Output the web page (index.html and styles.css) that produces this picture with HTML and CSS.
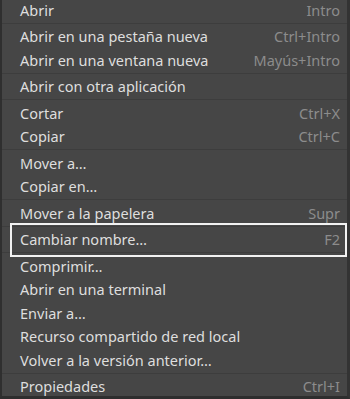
FILE: index.html
```html
<!DOCTYPE html>
<html lang="es">
<head>
    <meta charset="UTF-8">
    <meta name="viewport" content="width=device-width, initial-scale=1.0">
    <title>Menú contextual</title>
    <link rel="stylesheet" href="styles.css">
</head>
<body>
    <div class="menu">
        <ul class="menu-list">
            <li class="item first"><span>Abrir</span><span class="accel">Intro</span></li>
            <li class="sep"></li>
            <li class="item"><span>Abrir en una pestaña nueva</span><span class="accel">Ctrl+Intro</span></li>
            <li class="item"><span>Abrir en una ventana nueva</span><span class="accel">Mayús+Intro</span></li>
            <li class="sep"></li>
            <li class="item"><span>Abrir con otra aplicación</span></li>
            <li class="sep"></li>
            <li class="item"><span>Cortar</span><span class="accel">Ctrl+X</span></li>
            <li class="item"><span>Copiar</span><span class="accel">Ctrl+C</span></li>
            <li class="sep"></li>
            <li class="item"><span>Mover a…</span></li>
            <li class="item"><span>Copiar en…</span></li>
            <li class="sep"></li>
            <li class="item"><span>Mover a la papelera</span><span class="accel">Supr</span></li>
            <li class="sep"></li>
            <li class="item selected"><span>Cambiar nombre…</span><span class="accel">F2</span></li>
            <li class="sep"></li>
            <li class="item"><span>Comprimir…</span></li>
            <li class="item"><span>Abrir en una terminal</span></li>
            <li class="item"><span>Enviar a…</span></li>
            <li class="item"><span>Recurso compartido de red local</span></li>
            <li class="item"><span>Volver a la versión anterior…</span></li>
            <li class="sep"></li>
            <li class="item"><span>Propiedades</span><span class="accel">Ctrl+I</span></li>
        </ul>
    </div>
</body>
</html>
```

FILE: styles.css
```css
body {
    margin: 0;
    background-color: #2e2e2e;
    font-family: "Noto Sans", "Open Sans", sans-serif;
}

.menu {
    width: 350px;
    height: 399px;
    box-sizing: border-box;
    background-color: #464646;
    border-left: 2px solid #2f2f2f;
    border-right: 3px solid #333;
    border-bottom: 3px solid #2e2e2e;
    overflow: hidden;
}

.menu-list {
    list-style: none;
    margin: 0;
    padding: 0;
}

.item {
    position: relative;
    display: flex;
    justify-content: space-between;
    align-items: center;
    height: 23.5px;
    padding: 0 7px 0 18px;
    font-size: 14.5px;
    color: #dedede;
}

.item.first {
    margin-top: -2px;
}

.accel {
    color: #8c8c8c;
}

.sep {
    height: 1px;
    margin: 1px 0;
    background-color: #3d3d3d;
}

.selected::after {
    content: "";
    position: absolute;
    top: -5px;
    bottom: -6px;
    left: 8px;
    right: 0;
    border: 2px solid #f2f2f2;
}
```
